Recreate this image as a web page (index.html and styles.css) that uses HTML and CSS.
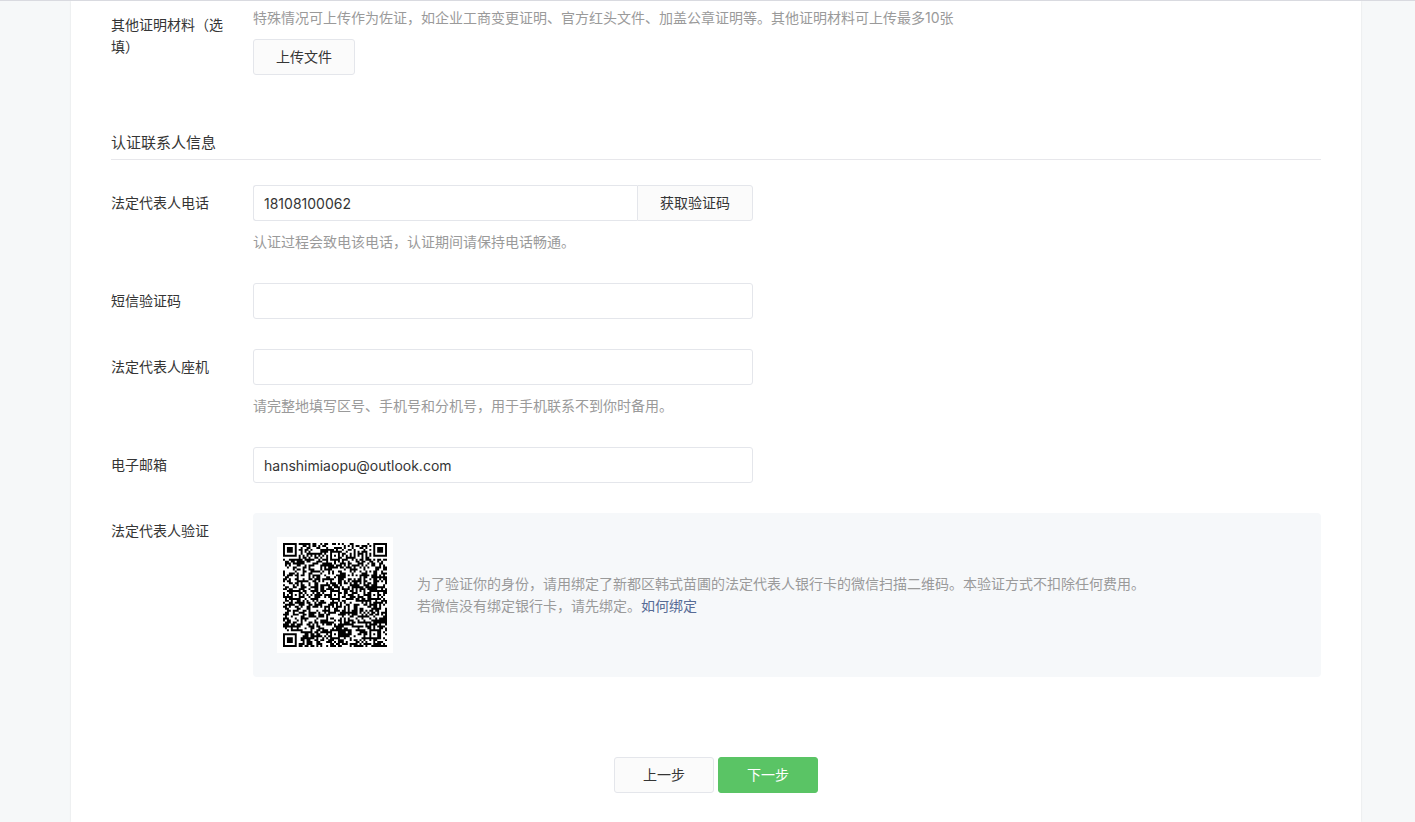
FILE: index.html
```
<!DOCTYPE html>
<html lang="zh-CN">
<head>
    <meta charset="UTF-8">
    <meta name="viewport" content="width=device-width, initial-scale=1.0">
    <title>填写认证资料</title>
    <link rel="stylesheet" href="styles.css">
</head>
<body>
    <form class="panel">
        <div class="form-row">
            <label class="form-label" for="upload">其他证明材料（选填）</label>
            <div class="form-field">
                <p class="tips">特殊情况可上传作为佐证，如企业工商变更证明、官方红头文件、加盖公章证明等。其他证明材料可上传最多10张</p>
                <button type="button" id="upload" class="btn btn-upload">上传文件</button>
            </div>
        </div>

        <h2>认证联系人信息</h2>

        <div class="form-row">
            <label class="form-label" for="phone">法定代表人电话</label>
            <div class="form-field">
                <div class="input-group">
                    <input type="text" id="phone" value="18108100062">
                    <button type="button" class="btn btn-code">获取验证码</button>
                </div>
                <p class="tips">认证过程会致电该电话，认证期间请保持电话畅通。</p>
            </div>
        </div>

        <div class="form-row">
            <label class="form-label" for="sms-code">短信验证码</label>
            <div class="form-field">
                <input type="text" id="sms-code">
            </div>
        </div>

        <div class="form-row">
            <label class="form-label" for="landline">法定代表人座机</label>
            <div class="form-field">
                <input type="text" id="landline">
                <p class="tips">请完整地填写区号、手机号和分机号，用于手机联系不到你时备用。</p>
            </div>
        </div>

        <div class="form-row">
            <label class="form-label" for="email">电子邮箱</label>
            <div class="form-field">
                <input type="text" id="email" value="hanshimiaopu@outlook.com">
            </div>
        </div>

        <div class="form-row">
            <span class="form-label">法定代表人验证</span>
            <div class="form-field verify">
                <svg class="qrcode" viewBox="0 0 53 53" role="img" aria-label="二维码">
                    <path id="qr-modules" d=""/>
                </svg>
                <p class="verify-text">为了验证你的身份，请用绑定了新都区韩式苗圃的法定代表人银行卡的微信扫描二维码。本验证方式不扣除任何费用。<br>若微信没有绑定银行卡，请先绑定。<a href="#">如何绑定</a></p>
            </div>
        </div>

        <div class="actions">
            <button type="button" class="btn">上一步</button>
            <button type="submit" class="btn btn-primary">下一步</button>
        </div>
    </form>

    <script src="script.js"></script>
</body>
</html>
```
FILE: styles.css
```
:root {
    --text-color: #353535;
    --tips-color: #9a9a9a;
    --border-color: #e4e6eb;
    --page-color: #f6f8f9;
    --primary-color: #5ac465;
    --link-color: #576b95;
}

* {
    box-sizing: border-box;
}

body {
    margin: 0;
    padding: 0 54px 0 71px;
    min-height: 100vh;
    display: flex;
    border-top: 1px solid #d9dae0;
    background: var(--page-color);
    color: var(--text-color);
    font: 14px/22px Inter, "Noto Sans CJK SC", sans-serif;
}

h2 {
    margin: 56px 0 25px;
    padding-bottom: 4px;
    border-bottom: 1px solid #e7e7eb;
    font-size: 15px;
    font-weight: 400;
    line-height: 24px;
}

p {
    margin: 0;
}

a {
    color: var(--link-color);
    text-decoration: none;
}

.panel {
    flex: 1;
    min-width: 0;
    padding: 6px 40px 28px;
    background: white;
    box-shadow: 0 0 2px rgba(0, 0, 0, 0.1);
}

.form-row {
    display: flex;
    gap: 30px;
}

.form-row + .form-row {
    margin-top: 30px;
}

.form-label {
    flex: none;
    width: 112px;
    padding-top: 7px;
}

.form-field {
    flex: 1;
    min-width: 0;
}

.tips {
    color: var(--tips-color);
}

input {
    display: block;
    width: 100%;
    max-width: 500px;
    height: 36px;
    padding: 0 10px;
    border: 1px solid var(--border-color);
    border-radius: 3px;
    background: white;
    color: var(--text-color);
    font: inherit;
}

input + .tips,
.input-group + .tips,
.tips + .btn {
    margin-top: 10px;
}

.input-group {
    display: flex;
    max-width: 500px;
}

.input-group input {
    flex: 1;
    min-width: 0;
    border-right: 0;
    border-radius: 3px 0 0 3px;
}

.btn {
    display: block;
    width: 100px;
    height: 36px;
    padding: 0;
    border: 1px solid var(--border-color);
    border-radius: 3px;
    background: #fbfbfb;
    color: var(--text-color);
    font: inherit;
    cursor: pointer;
}

.btn-upload {
    width: 102px;
}

.btn-code {
    width: 116px;
    border-radius: 0 3px 3px 0;
}

.btn-primary {
    border-color: var(--primary-color);
    background: var(--primary-color);
    color: white;
}

.verify {
    display: flex;
    align-items: center;
    gap: 24px;
    padding: 24px;
    border-radius: 4px;
    background: #f6f8fa;
}

.verify-text {
    color: var(--tips-color);
}

.qrcode {
    flex: none;
    width: 116px;
    height: 116px;
    padding: 6px;
    background: white;
}

.actions {
    display: flex;
    justify-content: center;
    gap: 4px;
    margin-top: 80px;
}
```
FILE: script.js
```
const SIZE = 53;
const FINDERS = [[3, 3], [49, 3], [3, 49]];
const ALIGNS = [[26, 6], [6, 26], [26, 26], [46, 26], [26, 46], [46, 46]];
let seed = 20731;

function random() {
    seed = (seed * 1103515245 + 12345) % 2147483648;
    return seed / 2147483648;
}

function distance(x, y, point) {
    return Math.max(Math.abs(x - point[0]), Math.abs(y - point[1]));
}

function isDark(x, y) {
    const filled = random() < 0.53;
    for (const p of FINDERS) {
        const d = distance(x, y, p);
        if (d <= 4) return d !== 2 && d !== 4;
    }
    for (const p of ALIGNS) {
        const d = distance(x, y, p);
        if (d <= 2) return d !== 1;
    }
    if (x === 6 || y === 6) return (x + y) % 2 === 0;
    return filled;
}

let path = '';
for (let y = 0; y < SIZE; y++) {
    for (let x = 0; x < SIZE; x++) {
        if (isDark(x, y)) path += `M${x} ${y}h1v1h-1z`;
    }
}
document.getElementById('qr-modules').setAttribute('d', path);
```
